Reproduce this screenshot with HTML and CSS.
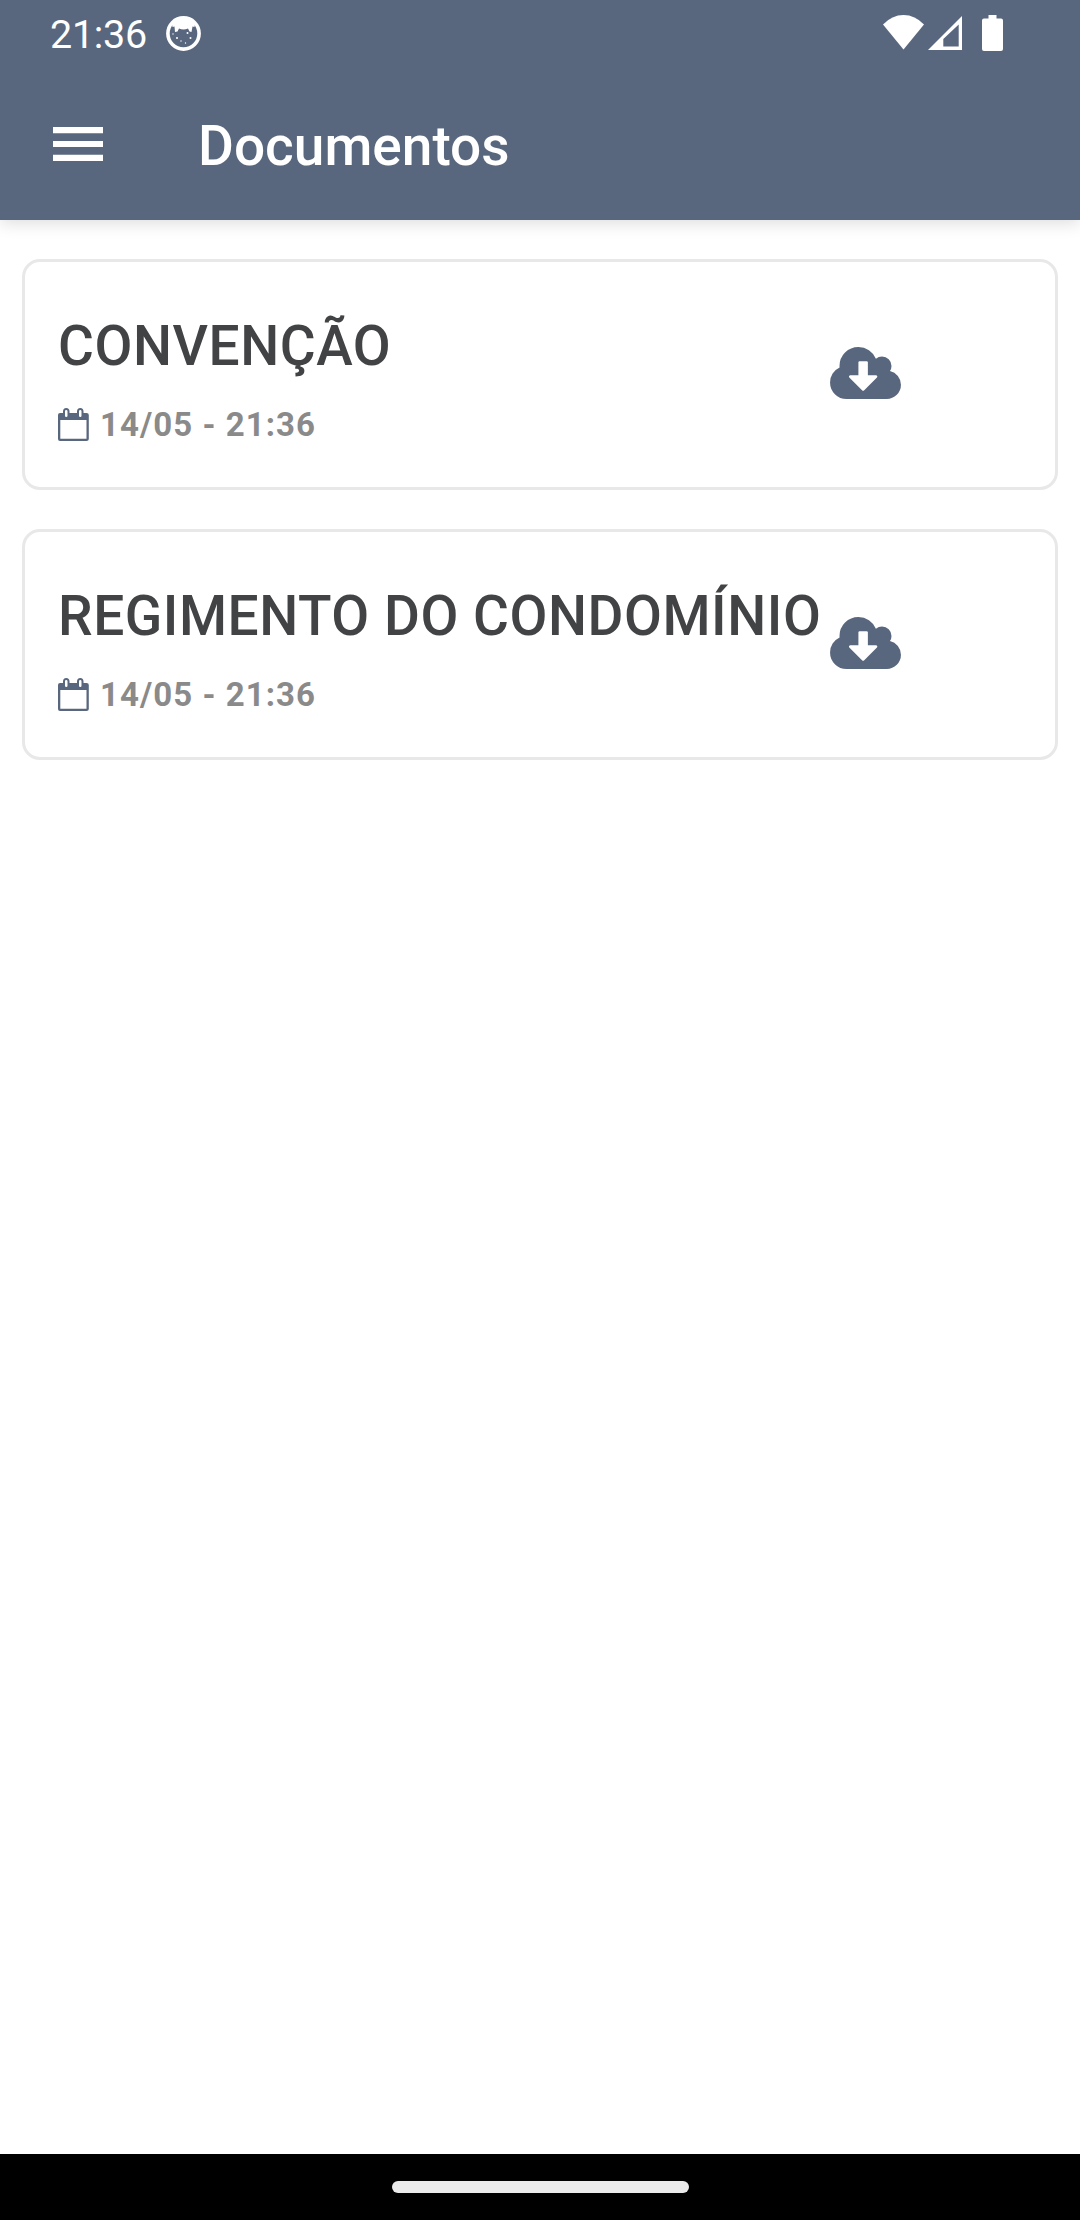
FILE: index.html
```html
<!DOCTYPE html>
<html lang="pt-BR">
<head>
    <meta charset="UTF-8">
    <meta name="viewport" content="width=device-width, initial-scale=1.0">
    <title>Documentos</title>
    <link rel="stylesheet" href="styles.css">
</head>
<body>
    <svg class="symbols" aria-hidden="true">
        <symbol id="icon-calendar" viewBox="0 0 31 33">
            <path fill-rule="evenodd" d="M2 5H5V3.500Q5 0 8.200 0Q11.500 0 11.500 3.500V5H19V3.500Q19 0 22.300 0Q25.500 0 25.500 3.500V5H28.500Q30.800 5 30.800 7V31Q30.800 33 28.500 33H2Q0 33 0 31V7Q0 5 2 5ZM2.300 12V30.700H28.500V12ZM8.200 2Q7 2 7 3.300V7.700Q7 9 8.200 9Q9.500 9 9.500 7.700V3.300Q9.500 2 8.200 2ZM22.300 2Q21 2 21 3.300V7.700Q21 9 22.300 9Q23.500 9 23.500 7.700V3.300Q23.500 2 22.300 2Z"/>
        </symbol>
        <symbol id="icon-download" viewBox="0 128 1920 1408">
            <path d="M1280 928q0-14-9-23t-23-9h-224v-352q0-13-9.500-22.500t-22.500-9.500h-192q-13 0-22.500 9.500t-9.500 22.500v352h-224q-13 0-22.500 9.500t-9.500 22.500q0 14 9 23l352 352q9 9 23 9t23-9l351-351q10-12 10-24zm640 224q0 159-112.500 271.500t-271.500 112.500h-1088q-185 0-316.500-131.500t-131.500-316.500q0-130 70-240t188-165q-2-30-2-43 0-212 150-362t362-150q156 0 285.500 87t188.500 231q71-62 166-62 106 0 181 75t75 181q0 76-41 138 130 31 213.500 135.500t83.500 238.500z"/>
        </symbol>
    </svg>

    <header class="header">
        <div class="status-bar">
            <span class="clock">21:36</span>
            <svg class="icon-cat" viewBox="0 0 35 35">
                <circle cx="17.500" cy="17.500" r="15.600" fill="none" stroke="currentColor" stroke-width="3.600"/>
                <path d="M6 8Q17.500-3 29 8L28.500 11L26.500 10.500L25.500 16L23.500 15.500L22 12.500Q17.500 14.500 13 12.500L11.500 15.500L9 16L8.500 10.500L6.500 11Z"/>
                <circle cx="11" cy="22" r="1"/>
                <circle cx="21.500" cy="17" r="1"/>
                <circle cx="24.500" cy="22" r="1"/>
                <circle cx="15" cy="25" r=".7"/>
                <circle cx="19.500" cy="27" r=".7"/>
                <circle cx="7" cy="18" r=".7"/>
            </svg>
            <div class="status-icons">
                <svg class="icon-wifi" viewBox="0 0 41 35"><path d="M0 9.500Q9 0 20.500 0Q32 0 41 9.500L20.500 34.500Z"/></svg>
                <svg class="icon-signal" viewBox="0 0 34 34"><path fill-rule="evenodd" d="M0 34L34 0V34ZM15.300 23V30.500H30.700V8.500Z"/></svg>
                <svg class="icon-battery" viewBox="0 0 21 36"><path d="M6.500 0H14.500V3.500H19Q21 3.500 21 5.500V34Q21 36 19 36H2Q0 36 0 34V5.500Q0 3.500 2 3.500H6.500Z"/></svg>
            </div>
        </div>
        <div class="toolbar">
            <svg class="icon-menu" viewBox="0 0 50 34"><path d="M0 0H50V6.300H0ZM0 14H50V20H0ZM0 27.700H50V34H0Z"/></svg>
            <h1>Documentos</h1>
        </div>
    </header>

    <main class="documents">
        <article class="card">
            <div class="card-info">
                <h2>CONVENÇÃO</h2>
                <p class="date"><svg class="icon-calendar"><use href="#icon-calendar"/></svg><span>14/05 - 21:36</span></p>
            </div>
            <svg class="icon-download"><use href="#icon-download"/></svg>
        </article>
        <article class="card">
            <div class="card-info">
                <h2>REGIMENTO DO CONDOMÍNIO</h2>
                <p class="date"><svg class="icon-calendar"><use href="#icon-calendar"/></svg><span>14/05 - 21:36</span></p>
            </div>
            <svg class="icon-download"><use href="#icon-download"/></svg>
        </article>
    </main>

    <footer class="nav-bar">
        <div class="nav-handle"></div>
    </footer>
</body>
</html>
```
FILE: styles.css
```css
:root {
    --primary-color: #59677e;
    --text-color: #414345;
    --muted-color: #8a8a8a;
    --border-color: #e8e8e8;
}

* {
    box-sizing: border-box;
}

body {
    margin: 0;
    height: 100vh;
    display: flex;
    flex-direction: column;
    font-family: Roboto, sans-serif;
    background-color: #ffffff;
    color: var(--text-color);
}

h1, h2, p {
    margin: 0;
    white-space: nowrap;
}

svg {
    display: block;
    flex: none;
    fill: currentColor;
}

.symbols {
    display: none;
}

.header {
    height: 220px;
    flex: none;
    background-color: var(--primary-color);
    color: #ffffff;
    box-shadow: 0 3px 16px rgba(0, 0, 0, 0.14);
}

.status-bar {
    display: flex;
    align-items: center;
    height: 67px;
    padding: 0 77px 0 50px;
}

.clock {
    width: 116px;
    padding-top: 2px;
    font-size: 39.5px;
    line-height: 67px;
    letter-spacing: -0.3px;
}

.icon-cat {
    width: 35px;
    height: 35px;
}

.status-icons {
    display: flex;
    align-items: flex-start;
    height: 37px;
    margin-left: auto;
}

.icon-wifi {
    width: 41px;
    height: 35px;
    margin-right: 4px;
}

.icon-signal {
    width: 34px;
    height: 34px;
    margin: 1px 20px 0 0;
}

.icon-battery {
    width: 21px;
    height: 36px;
}

.toolbar {
    display: flex;
    align-items: center;
    height: 153px;
    padding: 0 53px;
}

.icon-menu {
    width: 50px;
    height: 34px;
    margin-right: 95px;
}

h1 {
    padding-top: 4px;
    font-size: 55px;
    font-weight: 500;
    line-height: 64px;
}

.documents {
    flex: 1;
    display: flex;
    flex-direction: column;
    gap: 39px;
    padding: 39px 22px;
}

.card {
    display: flex;
    align-items: flex-start;
    height: 231px;
    padding: 52px 33px 0;
    border: 3px solid var(--border-color);
    border-radius: 18px;
}

.card-info {
    width: 772px;
}

h2 {
    font-size: 55px;
    font-weight: 500;
    line-height: 64px;
    letter-spacing: 0.55px;
}

.date {
    display: flex;
    align-items: center;
    margin-top: 27px;
    height: 39px;
    color: var(--muted-color);
    font-size: 33px;
    font-weight: 700;
    letter-spacing: 1.05px;
}

.icon-calendar {
    width: 31px;
    height: 33px;
    margin-right: 11px;
    color: var(--primary-color);
}

.icon-download {
    width: 71px;
    height: 52px;
    margin-top: 33px;
    color: var(--primary-color);
}

.nav-bar {
    display: flex;
    justify-content: center;
    height: 66px;
    padding-top: 27px;
    background-color: #000000;
}

.nav-handle {
    width: 297px;
    height: 12px;
    border-radius: 6px;
    background-color: #ebebeb;
}
```
